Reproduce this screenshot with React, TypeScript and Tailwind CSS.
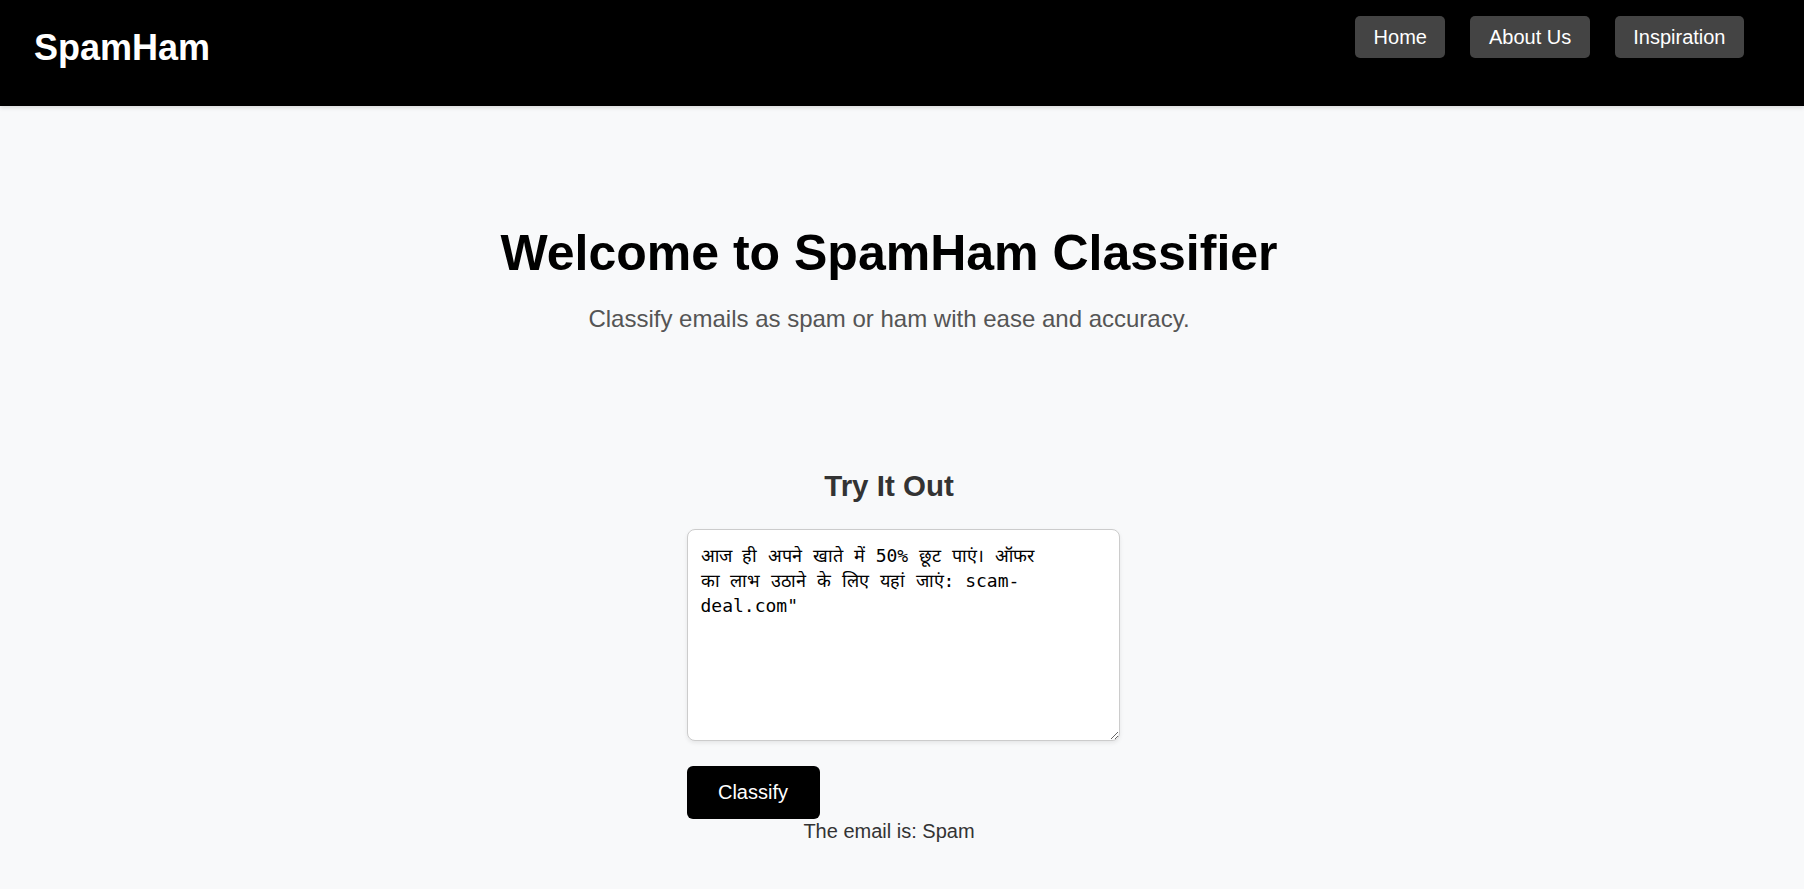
import React from "react";

export default function App() {
  const text =
    'आज ही अपने खाते में 50% छूट पाएं। ऑफर का लाभ उठाने के लिए यहां जाएं: scam-deal.com"';
  return (
    <div
      className="min-h-[889px] bg-[#f8f9fa]"
      style={{ fontFamily: '"Liberation Sans", Arial, sans-serif' }}
    >
      <header className="flex h-[106px] items-start justify-between bg-black pl-[34px] pr-[60px] shadow-[0_2px_4px_rgba(0,0,0,0.12)]">
        <div className="mt-[27px] text-[36px] font-bold leading-[41px] text-white">SpamHam</div>
        <nav className="mt-[16px] flex gap-[25px]">
          {["Home", "About Us", "Inspiration"].map((l) => (
            <a
              key={l}
              href="#"
              className="rounded-[5px] bg-[#444444] px-[18.5px] py-[10px] text-[20px] leading-[22px] text-white"
            >
              {l}
            </a>
          ))}
        </nav>
      </header>

      <main className="flex flex-col items-center pr-[26px]">
        <h1 className="mt-[117px] text-[50px] font-bold leading-[60px] text-black">
          Welcome to SpamHam Classifier
        </h1>
        <p className="mt-[22px] text-[24px] leading-[28px] text-[#555555]">
          Classify emails as spam or ham with ease and accuracy.
        </p>

        <h2 className="mt-[136px] text-[29.5px] font-bold leading-[34px] text-[#333333]">Try It Out</h2>

        <div className="mt-[26px] w-[405px]">
          <textarea
            defaultValue={text}
            className="block h-[212px] w-[433px] rounded-[8px] border border-[#cccccc] bg-white py-[13px] pl-[13px] pr-[68px] text-[18px] leading-[25px] text-black shadow-[0_2px_4px_rgba(0,0,0,0.08)] outline-none"
            style={{ fontFamily: '"DejaVu Sans Mono", "Liberation Mono", monospace' }}
          />
          <button className="mt-[25px] block h-[53px] w-[133px] rounded-[6px] bg-black text-[20px] leading-[23px] text-white">
            Classify
          </button>
        </div>
        <p className="text-[20px] leading-[24px] text-[#333333]">The email is: Spam</p>
      </main>
    </div>
  );
}
